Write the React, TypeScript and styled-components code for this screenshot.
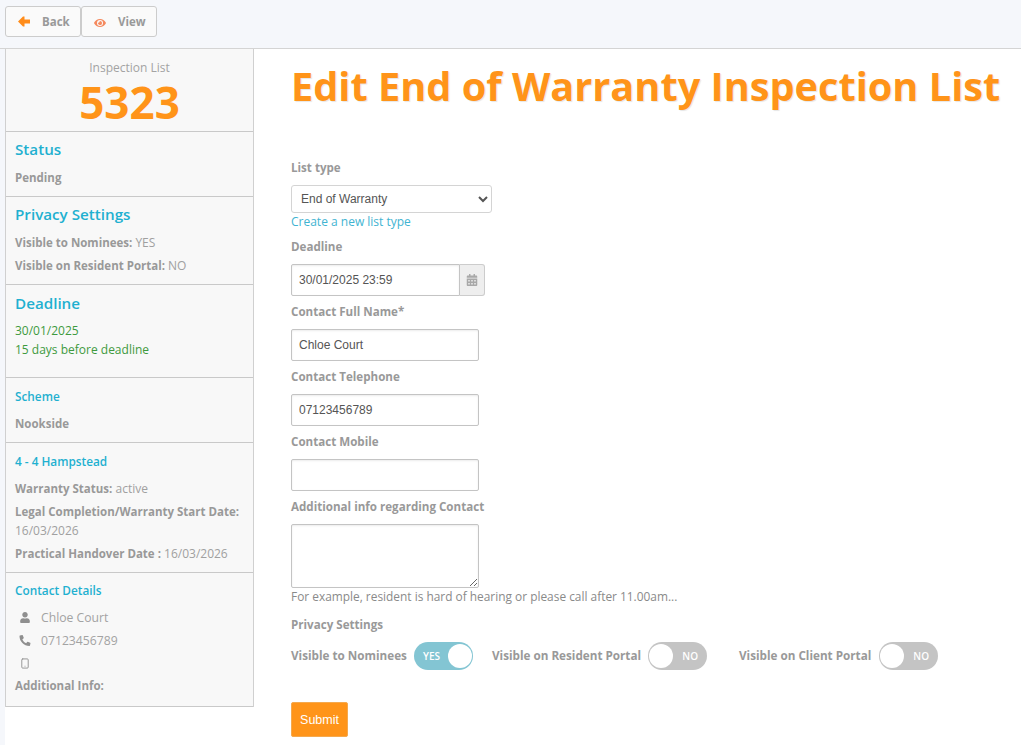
import React from 'react';
import styled, { createGlobalStyle } from 'styled-components';
import { FaEye, FaUser, FaPhoneAlt, FaCalendarAlt } from 'react-icons/fa';
import { FiSmartphone } from 'react-icons/fi';

const GlobalStyle = createGlobalStyle`
  html, body {
    margin: 0;
    padding: 0;
    background: #ffffff;
    font-family: 'Open Sans', sans-serif;
    color: #999999;
  }
  * {
    box-sizing: border-box;
  }
`;

const Page = styled.div`
  width: 1021px;
  height: 745px;
  overflow: hidden;
`;

const TopBar = styled.div`
  display: flex;
  height: 49px;
  padding: 6px 0 0 5px;
  background: #f5f7fb;
  border-bottom: 1px solid #d4d4d4;
`;

const ToolButton = styled.button<{ $icon: string; $gap: number }>`
  display: flex;
  align-items: center;
  width: 76px;
  height: 31px;
  padding: 0 0 0 12px;
  gap: ${({ $gap }) => $gap}px;
  background: #fafafa;
  border: 1px solid #cccccc;
  border-radius: 3px;
  font: 700 11.5px 'Open Sans', sans-serif;
  color: #999999;
  svg {
    color: ${({ $icon }) => $icon};
    flex: none;
  }
`;

const Body = styled.div`
  display: flex;
  height: 696px;
  padding-left: 5px;
  background: #f5f7fb;
`;

const SideColumn = styled.div`
  width: 249px;
  flex: none;
  background: #ffffff;
`;

const Sidebar = styled.aside`
  background: #f8f8f8;
  border-left: 1px solid #d0d0d0;
  border-right: 1px solid #d0d0d0;
`;

const Section = styled.section<{ $height: number }>`
  height: ${({ $height }) => $height}px;
  padding: 0 9px;
  border-bottom: 1px solid #c9c9c9;
`;

const ListHead = styled(Section)`
  text-align: center;
  padding-top: 11px;
`;

const ListLabel = styled.div`
  font-size: 12px;
  line-height: 15px;
  color: #a3a3a3;
`;

const ListNumber = styled.div`
  font-size: 44px;
  font-weight: 700;
  line-height: 40px;
  margin-top: 7px;
  color: #ff9419;
`;

const SectionTitle = styled.h3<{ $size: number; $top: number }>`
  margin: 0;
  padding-top: ${({ $top }) => $top}px;
  font-size: ${({ $size }) => $size}px;
  line-height: 20px;
  font-weight: 600;
  color: #1fb0d0;
`;

const Info = styled.div<{ $top?: number }>`
  margin-top: ${({ $top }) => $top ?? 0}px;
  font-size: 12px;
  line-height: 18px;
  color: #a0a0a0;
  white-space: nowrap;
  b {
    font-size: 11.5px;
    font-weight: 700;
    color: #999999;
  }
`;

const GreenInfo = styled(Info)`
  color: #3e9a3e;
`;

const ContactRow = styled.div<{ $top?: number }>`
  display: flex;
  align-items: center;
  height: 23px;
  margin-top: ${({ $top }) => $top ?? 0}px;
  padding-left: 2px;
  font-size: 12.2px;
  color: #a3a3a3;
  svg {
    width: 16px;
    flex: none;
    margin-right: 8px;
    color: #8f8f8f;
  }
`;

const Main = styled.main`
  flex: 1;
  padding: 13px 0 0 37px;
  background: #ffffff;
`;

const Title = styled.h1`
  margin: 0 0 50px;
  font-size: 39.7px;
  line-height: 48px;
  font-weight: 700;
  white-space: nowrap;
  color: #ff9419;
  text-shadow: 1px 1px 1px rgba(0, 0, 0, 0.1);
`;

const Label = styled.label`
  display: block;
  font-size: 11.6px;
  font-weight: 700;
  line-height: 16px;
  color: #999999;
`;

const Field = styled.div<{ $height: number }>`
  height: ${({ $height }) => $height}px;
`;

const Select = styled.select`
  display: block;
  width: 201px;
  height: 28px;
  margin-top: 9px;
  padding: 0 0 0 5px;
  background: #ffffff;
  border: 1px solid #d4d4d4;
  border-radius: 3px;
  font: 12px 'Liberation Sans', sans-serif;
  color: #555555;
`;

const TextLink = styled.a`
  display: block;
  font-size: 12px;
  line-height: 17px;
  color: #3fb4d2;
`;

const InputGroup = styled.div`
  display: flex;
  width: 194px;
  margin-top: 9px;
`;

const TextInput = styled.input`
  display: block;
  width: 188px;
  height: 32px;
  margin-top: 9px;
  padding: 0 7px;
  border: 1px solid #c4c4c4;
  border-radius: 2px;
  box-shadow: inset 0 1px 2px rgba(0, 0, 0, 0.08);
  font: 12px 'Liberation Sans', sans-serif;
  color: #555555;
  outline: none;
`;

const GroupInput = styled(TextInput)`
  width: 169px;
  margin-top: 0;
  border-radius: 2px 0 0 2px;
`;

const Addon = styled.span`
  display: flex;
  align-items: center;
  justify-content: center;
  width: 25px;
  height: 32px;
  background: #eeeeee;
  border: 1px solid #cccccc;
  border-left: 0;
  border-radius: 0 3px 3px 0;
  color: #a8a8a8;
`;

const TextArea = styled.textarea`
  display: block;
  width: 188px;
  height: 64px;
  margin-top: 9px;
  border: 1px solid #c4c4c4;
  border-radius: 2px;
  box-shadow: inset 0 1px 2px rgba(0, 0, 0, 0.08);
  outline: none;
`;

const Hint = styled.p`
  margin: 0;
  font-size: 11.9px;
  line-height: 16px;
  white-space: nowrap;
  color: #8a8a8a;
`;

const ToggleRow = styled.div`
  display: flex;
  align-items: center;
  height: 28px;
  margin-top: 9px;
`;

const ToggleLabel = styled.span<{ $width: number }>`
  width: ${({ $width }) => $width}px;
  flex: none;
  margin-bottom: 3px;
  font-size: 11.7px;
  font-weight: 700;
  white-space: nowrap;
  color: #999999;
`;

const Toggle = styled.div<{ $on?: boolean; $gap: number }>`
  display: flex;
  flex-direction: ${({ $on }) => ($on ? 'row' : 'row-reverse')};
  align-items: center;
  justify-content: space-between;
  width: 59px;
  height: 28px;
  flex: none;
  margin-right: ${({ $gap }) => $gap}px;
  padding: ${({ $on }) => ($on ? '0 1px 0 9px' : '0 9px 0 1px')};
  border-radius: 14px;
  background: ${({ $on }) => ($on ? '#83c5d3' : '#c4c4c4')};
  font-size: 10px;
  font-weight: 600;
  color: #ffffff;
`;

const Knob = styled.span`
  width: 24px;
  height: 24px;
  border-radius: 50%;
  background: #ffffff;
`;

const Submit = styled.button`
  display: block;
  width: 57px;
  height: 35px;
  margin-top: 32px;
  padding: 0;
  background: #ff9419;
  border: 1px solid #f5a94e;
  border-radius: 2px;
  font: 12.5px 'Liberation Sans', sans-serif;
  color: #ffffff;
`;

const BackArrow = () => (
  <svg width="12" height="11" viewBox="0 0 12 11" fill="currentColor">
    <path d="M0 5.5 5 .5h1.5v3H12v4H6.5v3H5z" />
  </svg>
);

const App = () => {
  return (
    <Page>
      <GlobalStyle />
      <TopBar>
        <ToolButton $icon="#ff8c1a" $gap={12}>
          <BackArrow />
          Back
        </ToolButton>
        <ToolButton $icon="#f58a5f" $gap={12}>
          <FaEye size={12} style={{ marginTop: 3 }} />
          View
        </ToolButton>
      </TopBar>
      <Body>
        <SideColumn>
          <Sidebar>
            <ListHead $height={83}>
              <ListLabel>Inspection List</ListLabel>
              <ListNumber>5323</ListNumber>
            </ListHead>
            <Section $height={65}>
              <SectionTitle $size={15.2} $top={7}>Status</SectionTitle>
              <Info $top={10}><b>Pending</b></Info>
            </Section>
            <Section $height={88}>
              <SectionTitle $size={15.2} $top={7}>Privacy Settings</SectionTitle>
              <Info $top={10}><b>Visible to Nominees:</b> YES</Info>
              <Info $top={5}><b>Visible on Resident Portal:</b> NO</Info>
            </Section>
            <Section $height={93}>
              <SectionTitle $size={15.2} $top={8}>Deadline</SectionTitle>
              <GreenInfo $top={9}>30/01/2025</GreenInfo>
              <GreenInfo $top={1}>15 days before deadline</GreenInfo>
            </Section>
            <Section $height={65}>
              <SectionTitle $size={11.8} $top={8}>Scheme</SectionTitle>
              <Info $top={9}><b>Nookside</b></Info>
            </Section>
            <Section $height={130}>
              <SectionTitle $size={11.8} $top={8}>4 - 4 Hampstead</SectionTitle>
              <Info $top={9}><b>Warranty Status:</b> active</Info>
              <Info $top={5}><b>Legal Completion/Warranty Start Date:</b></Info>
              <Info $top={1}>16/03/2026</Info>
              <Info $top={5}><b>Practical Handover Date :</b> 16/03/2026</Info>
            </Section>
            <Section $height={134}>
              <SectionTitle $size={11.8} $top={7}>Contact Details</SectionTitle>
              <ContactRow $top={6}>
                <FaUser size={11} />
                Chloe Court
              </ContactRow>
              <ContactRow>
                <FaPhoneAlt size={11} />
                07123456789
              </ContactRow>
              <ContactRow>
                <FiSmartphone size={11} />
              </ContactRow>
              <Info $top={2}><b>Additional Info:</b></Info>
            </Section>
          </Sidebar>
        </SideColumn>
        <Main>
          <Title>Edit End of Warranty Inspection List</Title>
          <Field $height={79}>
            <Label>List type</Label>
            <Select defaultValue="End of Warranty">
              <option>End of Warranty</option>
            </Select>
            <TextLink>Create a new list type</TextLink>
          </Field>
          <Field $height={65}>
            <Label>Deadline</Label>
            <InputGroup>
              <GroupInput readOnly value="30/01/2025 23:59" />
              <Addon><FaCalendarAlt size={12} /></Addon>
            </InputGroup>
          </Field>
          <Field $height={65}>
            <Label>Contact Full Name*</Label>
            <TextInput readOnly value="Chloe Court" />
          </Field>
          <Field $height={65}>
            <Label>Contact Telephone</Label>
            <TextInput readOnly value="07123456789" />
          </Field>
          <Field $height={65}>
            <Label>Contact Mobile</Label>
            <TextInput readOnly value="" />
          </Field>
          <Field $height={118}>
            <Label>Additional info regarding Contact</Label>
            <TextArea readOnly />
            <Hint>For example, resident is hard of hearing or please call after 11.00am...</Hint>
          </Field>
          <Label>Privacy Settings</Label>
          <ToggleRow>
            <ToggleLabel $width={123}>Visible to Nominees</ToggleLabel>
            <Toggle $on $gap={19}>YES<Knob /></Toggle>
            <ToggleLabel $width={156}>Visible on Resident Portal</ToggleLabel>
            <Toggle $gap={32}>NO<Knob /></Toggle>
            <ToggleLabel $width={140}>Visible on Client Portal</ToggleLabel>
            <Toggle $gap={0}>NO<Knob /></Toggle>
          </ToggleRow>
          <Submit>Submit</Submit>
        </Main>
      </Body>
    </Page>
  );
};

export default App;
